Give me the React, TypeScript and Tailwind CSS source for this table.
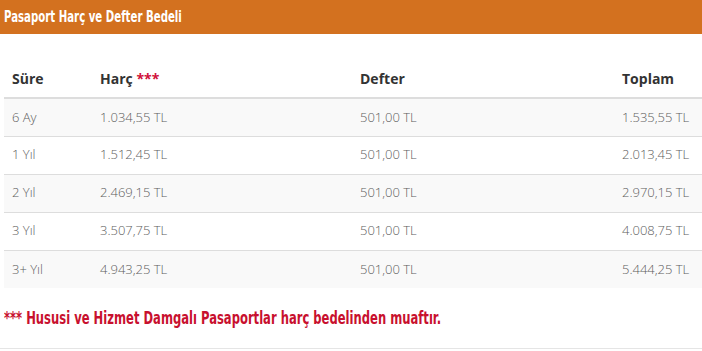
import React from 'react';

const rows = [
  { sure: '6 Ay', harc: '1.034,55 TL', defter: '501,00 TL', toplam: '1.535,55 TL' },
  { sure: '1 Yıl', harc: '1.512,45 TL', defter: '501,00 TL', toplam: '2.013,45 TL' },
  { sure: '2 Yıl', harc: '2.469,15 TL', defter: '501,00 TL', toplam: '2.970,15 TL' },
  { sure: '3 Yıl', harc: '3.507,75 TL', defter: '501,00 TL', toplam: '4.008,75 TL' },
  { sure: '3+ Yıl', harc: '4.943,25 TL', defter: '501,00 TL', toplam: '5.444,25 TL' },
];

export default function App() {
  return (
    <div className="w-[702px] h-[351px] bg-white overflow-hidden">
      {/* Title bar */}
      <div className="h-[34px] bg-[#d3711f] flex items-center pl-1">
        <span className="inline-block origin-left scale-x-[0.755] whitespace-nowrap text-white font-bold text-[15px] font-['DejaVu_Sans_Condensed','Liberation_Sans',sans-serif]">
          Pasaport Harç ve Defter Bedeli
        </span>
      </div>

      {/* Table */}
      <div className="pt-[26px] pl-1">
        <table className="w-[698px] table-fixed border-collapse font-['Open_Sans',sans-serif] text-[13px]">
          <colgroup>
            <col className="w-[88px]" />
            <col className="w-[260px]" />
            <col className="w-[262px]" />
            <col className="w-[88px]" />
          </colgroup>
          <thead>
            <tr className="border-b-2 border-[#dddddd]">
              <th className="px-2 py-2 h-[37px] text-left font-bold text-[14px] text-[#333333]">Süre</th>
              <th className="px-2 py-2 text-left font-bold text-[14px] text-[#333333]">
                Harç <span className="text-[#d0103a]">***</span>
              </th>
              <th className="px-2 py-2 text-left font-bold text-[14px] text-[#333333]">Defter</th>
              <th className="px-2 py-2 text-left font-bold text-[14px] text-[#333333]">Toplam</th>
            </tr>
          </thead>
          <tbody>
            {rows.map((r, i) => (
              <tr
                key={r.sure}
                className={`border-t border-[#dddddd] text-[#5e5e5e] font-light ${i % 2 === 0 ? 'bg-[#f9f9f9]' : 'bg-white'}`}
              >
                <td className="px-2 h-[38px] whitespace-nowrap">{r.sure}</td>
                <td className="px-2 whitespace-nowrap">{r.harc}</td>
                <td className="px-2 whitespace-nowrap">{r.defter}</td>
                <td className="px-2 whitespace-nowrap">{r.toplam}</td>
              </tr>
            ))}
          </tbody>
        </table>
      </div>

      {/* Footnote */}
      <div className="pl-1 pt-[18px] h-[61px] border-b border-[#e5e5e5]">
        <p className="inline-block origin-left scale-x-[0.715] whitespace-nowrap text-[#c8102e] font-bold text-[18px] leading-6 font-['DejaVu_Sans_Condensed','Liberation_Sans',sans-serif]">
          *** Hususi ve Hizmet Damgalı Pasaportlar harç bedelinden muaftır.
        </p>
      </div>
    </div>
  );
}
